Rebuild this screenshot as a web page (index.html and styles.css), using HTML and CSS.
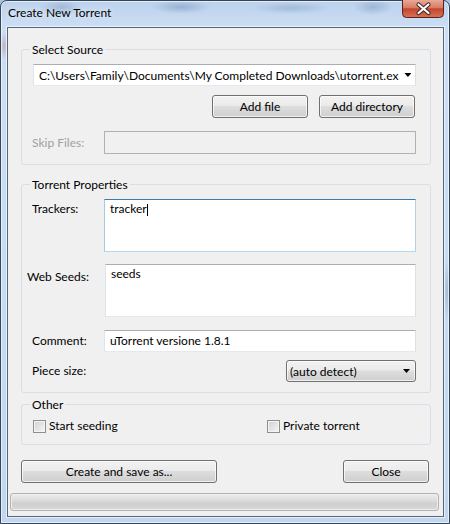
FILE: index.html
```html
<!DOCTYPE html>
<html lang="en">
<head>
    <meta charset="UTF-8">
    <title>Create New Torrent</title>
    <link rel="stylesheet" href="styles.css">
</head>
<body>
    <div class="window">
        <div class="titlebar">
            <span class="title">Create New Torrent</span>
            <div class="close-box">
                <svg width="42" height="18" viewBox="0 0 42 18">
                    <defs>
                        <linearGradient id="closeGrad" x1="0" y1="0" x2="0" y2="1">
                            <stop offset="0" stop-color="#e9a897"/>
                            <stop offset="0.45" stop-color="#d67a64"/>
                            <stop offset="0.5" stop-color="#c4452d"/>
                            <stop offset="1" stop-color="#d5745a"/>
                        </linearGradient>
                    </defs>
                    <path d="M0.5 0 V13.5 Q0.5 17.5 4.5 17.5 H37.5 Q41.5 17.5 41.5 13.5 V0" fill="url(#closeGrad)" stroke="#5a2218"/>
                    <path d="M16.5 4.5 L26.5 13 M26.5 4.5 L16.5 13" stroke="#3b2623" stroke-width="4.2" stroke-linecap="round"/>
                    <path d="M16.5 4.5 L26.5 13 M26.5 4.5 L16.5 13" stroke="#ffffff" stroke-width="2.2" stroke-linecap="round"/>
                </svg>
            </div>
        </div>

        <div class="client">
            <!-- source -->
            <fieldset class="group">
                <legend>Select Source</legend>
                <div class="combo">
                    <span class="combo-text">C:\Users\Family\Documents\My Completed Downloads\utorrent.ex</span>
                    <span class="arrow"></span>
                </div>
                <div class="button-row">
                    <button type="button" class="btn btn-small">Add file</button>
                    <button type="button" class="btn btn-small">Add directory</button>
                </div>
                <div class="field-row skip-row">
                    <span class="field-label disabled">Skip Files:</span>
                    <div class="edit edit-disabled"></div>
                </div>
            </fieldset>

            <!-- properties -->
            <fieldset class="group props">
                <legend>Torrent Properties</legend>
                <div class="field-row top">
                    <span class="field-label trackers-label">Trackers:</span>
                    <div class="edit multi focused">tracker<span class="caret"></span></div>
                </div>
                <div class="field-row top seeds-row">
                    <span class="field-label seeds-label">Web Seeds:</span>
                    <div class="edit multi">seeds</div>
                </div>
                <div class="field-row comment-row">
                    <span class="field-label">Comment:</span>
                    <div class="edit">uTorrent versione 1.8.1</div>
                </div>
                <div class="field-row piece-row">
                    <span class="field-label">Piece size:</span>
                    <div class="dropdown">
                        <span>(auto detect)</span>
                        <span class="arrow"></span>
                    </div>
                </div>
            </fieldset>

            <!-- other -->
            <fieldset class="group other">
                <legend>Other</legend>
                <div class="check-row">
                    <span class="check"><span class="checkbox"></span>Start seeding</span>
                    <span class="check"><span class="checkbox"></span>Private torrent</span>
                </div>
            </fieldset>

            <div class="dialog-buttons">
                <button type="button" class="btn btn-create">Create and save as...</button>
                <button type="button" class="btn btn-close">Close</button>
            </div>

            <div class="progress"></div>
        </div>
    </div>
</body>
</html>
```

FILE: styles.css
```css
html, body {
    margin: 0;
    padding: 0;
}
body {
    font-family: Lato, "Open Sans", sans-serif;
    font-size: 12px;
    color: #000;
    background: #a9c2e0;
}

/* window frame (aero glass) */
.window {
    box-sizing: border-box;
    width: 450px;
    height: 524px;
    display: flex;
    flex-direction: column;
    padding: 0 5px 6px 6px;
    border: 1px solid #33465b;
    border-radius: 7px 7px 0 0;
    box-shadow: inset 0 0 0 1px rgba(255, 255, 255, 0.6);
    background:
        radial-gradient(ellipse 22px 8px at 60px 7px, rgba(95, 125, 170, 0.35), transparent),
        radial-gradient(ellipse 30px 7px at 180px 6px, rgba(95, 125, 170, 0.4), transparent),
        radial-gradient(ellipse 40px 6px at 290px 7px, rgba(95, 125, 170, 0.3), transparent),
        radial-gradient(ellipse 20px 8px at 372px 6px, rgba(95, 125, 170, 0.35), transparent),
        radial-gradient(ellipse 4px 14px at 3px 45px, rgba(190, 110, 110, 0.4), transparent),
        radial-gradient(ellipse 3px 30px at 446px 290px, rgba(95, 120, 160, 0.35), transparent),
        linear-gradient(#bcd2ec, #cbdef4 26px, #c2d7ef);
}
.titlebar {
    height: 26px;
    display: flex;
    justify-content: space-between;
    align-items: flex-start;
}
.title {
    margin-left: 1px;
    padding-top: 4px;
    line-height: 16px;
    text-shadow: 0 0 6px rgba(255, 255, 255, 0.9);
}
.close-box {
    margin-top: -1px;
    height: 18px;
}
.close-box svg {
    display: block;
}

/* dialog body */
.client {
    flex: 1;
    display: flex;
    flex-direction: column;
    border: 1px solid #56677a;
    background: #f0f0f0;
    box-shadow: 0 0 0 1px rgba(255, 255, 255, 0.6);
}

.group {
    min-width: 0;
    margin: 14px 12px 0 13px;
    padding: 7px 14px 10px 11px;
    border: 1px solid #d5dfe5;
    border-radius: 3px;
}
.group legend {
    margin-left: -3px;
    padding: 0 2px;
    line-height: 15px;
}
.props {
    margin-top: 12px;
}
.other {
    margin-top: 4px;
    padding-top: 6px;
}

.arrow {
    flex-shrink: 0;
    width: 7px;
    height: 4px;
    background: #000;
    clip-path: polygon(0 0, 100% 0, 50% 100%);
}

.combo {
    box-sizing: border-box;
    height: 22px;
    display: flex;
    align-items: center;
    padding: 0 6px 0 5px;
    background: #fff;
    border: 1px solid;
    border-color: #abadb3 #dbdfe6 #e3e9ef #e2e3ea;
}
.combo-text {
    flex: 1;
    white-space: nowrap;
    margin-right: 6px;
}

.btn {
    box-sizing: border-box;
    height: 23px;
    padding: 0;
    font: inherit;
    color: #000;
    border: 1px solid #707070;
    border-radius: 3px;
    background: linear-gradient(#f2f2f2, #ebebeb 45%, #dddddd 50%, #cfcfcf);
    box-shadow: inset 0 0 0 1px rgba(255, 255, 255, 0.7);
}
.button-row {
    display: flex;
    justify-content: flex-end;
    gap: 11px;
    margin: 9px 1px 0 0;
}
.btn-small {
    width: 96px;
}

.field-row {
    display: flex;
    align-items: center;
}
.field-row.top {
    align-items: flex-start;
}
.field-label {
    flex-shrink: 0;
    width: 72px;
    margin-left: -1px;
    line-height: 16px;
}
.disabled {
    color: #a0a0a0;
}
.skip-row {
    margin-top: 13px;
}
.trackers-label {
    padding-top: 2px;
}
.seeds-row {
    margin-top: 12px;
}
.seeds-label {
    width: 78px;
    margin-left: -6px;
    padding-top: 5px;
}
.comment-row {
    margin-top: 13px;
}
.piece-row {
    margin-top: 8px;
}

.edit {
    flex: 1;
    box-sizing: border-box;
    height: 22px;
    padding: 0 5px;
    line-height: 19px;
    background: #fff;
    border: 1px solid;
    border-color: #abadb3 #dbdfe6 #e3e9ef #e2e3ea;
}
.edit-disabled {
    height: 23px;
    background: #f0f0f0;
    border-color: #adb2b5;
}
.multi {
    height: 53px;
    padding-top: 1px;
    line-height: 16px;
}
.focused {
    border-color: #3d7bad #b5cfe7 #b7d9ed #a4c9e3;
}
.caret {
    display: inline-block;
    width: 1px;
    height: 12px;
    vertical-align: -3px;
    background: #000;
}

.dropdown {
    box-sizing: border-box;
    width: 130px;
    height: 22px;
    margin-left: auto;
    display: flex;
    align-items: center;
    justify-content: space-between;
    padding: 0 5px 0 3px;
    border: 1px solid #707070;
    border-radius: 3px;
    background: linear-gradient(#f2f2f2, #ebebeb 45%, #dddddd 50%, #cfcfcf);
    box-shadow: inset 0 0 0 1px rgba(255, 255, 255, 0.7);
}

.check-row {
    display: grid;
    grid-template-columns: 234px 1fr;
    height: 16px;
    line-height: 16px;
}
.check {
    display: flex;
    align-items: center;
    gap: 3px;
}
.checkbox {
    box-sizing: border-box;
    width: 13px;
    height: 13px;
    border: 1px solid #8f8f8f;
    background: linear-gradient(135deg, #cfd1d4, #f6f6f6);
    box-shadow: inset 0 0 0 1px #f4f4f4;
}

.dialog-buttons {
    display: flex;
    justify-content: space-between;
    margin: 15px 14px 0 13px;
}
.btn-create {
    width: 196px;
}
.btn-close {
    width: 86px;
}

.progress {
    height: 18px;
    margin: 10px 4px 0 2px;
    box-sizing: border-box;
    border: 1px solid #b2b2b2;
    border-radius: 3px;
    background: linear-gradient(#ededed, #dcdcdc 40%, #cfcfcf 60%, #d9d9d9);
    box-shadow: inset 0 0 0 1px #eeeeee;
}
```
